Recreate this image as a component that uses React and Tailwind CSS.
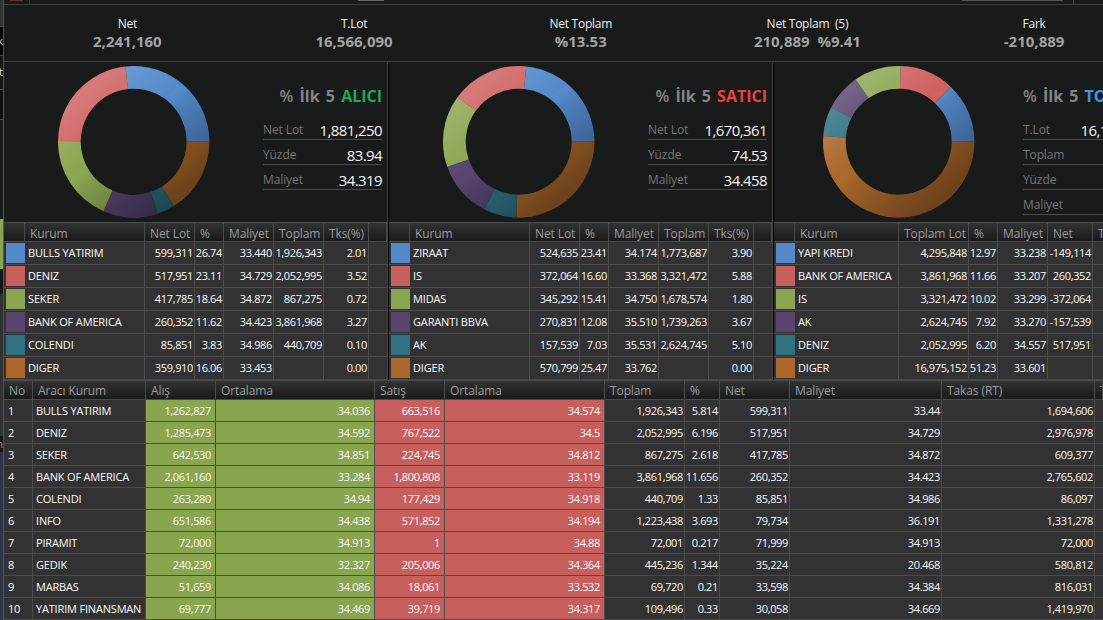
const HEAD = 'bg-linear-to-b from-[#323333] to-[#191a1a]';
const TXT = 'text-[11px] tracking-[-0.35px] text-[#fafafa]';

const COLORS = ['#5389cb', '#cf6060', '#8ba550', '#57446f', '#2f7181', '#ac682b'];
const SWATCHES = ['bg-[#5389c6]', 'bg-[#c75f5d]', 'bg-[#8ba550]', 'bg-[#57446f]', 'bg-[#2f7181]', 'bg-[#ac682b]'];

function point(r, share) {
  const a = share * Math.PI * 2;
  return `${(76 + r * Math.cos(a)).toFixed(2)} ${(76 - r * Math.sin(a)).toFixed(2)}`;
}

function Donut({ id, shares }) {
  let from = 0;
  const total = shares.reduce((a, b) => a + b, 0);
  const arcs = shares.map((s, i) => {
    const a = from;
    const b = from + s / total;
    from = b;
    const big = b - a > 0.5 ? 1 : 0;
    const d = `M${point(75.7, a)}A75.7 75.7 0 ${big} 0 ${point(75.7, b)}L${point(53, b)}A53 53 0 ${big} 1 ${point(53, a)}Z`;
    return <path key={i} d={d} fill={COLORS[i]} />;
  });
  return (
    <svg width="152" height="152" viewBox="0.3 0.2 152 152" className="shrink-0">
      <defs>
        <linearGradient id={id} x1="0.15" y1="0.1" x2="0.85" y2="0.9">
          <stop offset="0" stopColor="#fff" stopOpacity="0.16" />
          <stop offset="0.4" stopColor="#fff" stopOpacity="0" />
          <stop offset="0.5" stopColor="#000" stopOpacity="0.06" />
          <stop offset="1" stopColor="#000" stopOpacity="0.36" />
        </linearGradient>
      </defs>
      {arcs}
      <circle cx="76" cy="76" r="64.35" fill="none" stroke={`url(#${id})`} strokeWidth="22.7" />
    </svg>
  );
}

function Summary({ label, value }) {
  return (
    <div className="flex w-[226.7px] shrink-0 flex-col items-center whitespace-pre">
      <div className="text-[12px] leading-[18px] tracking-[-0.25px] text-[#f0f0f0]">{label}</div>
      <div className="-mt-px text-[15px] font-bold leading-[18px] text-[#a3a3a3]">{value}</div>
    </div>
  );
}

function Panel({ id, title, color, chartPad, infoCls, titleCls, cols, heads, rows, shares, info }) {
  return (
    <section className="flex w-[383px] shrink-0 flex-col overflow-hidden bg-[#191a1a]">
      <div className={`flex h-[160px] pt-1 ${chartPad}`}>
        <Donut id={id} shares={shares} />
        <div className={`${infoCls} shrink-0 pt-[18px]`}>
          <div className={`flex h-6 items-center whitespace-pre text-[16px] font-bold [word-spacing:2px] text-[#858585] ${titleCls}`}>
            <span className="font-semibold">% </span>İlk 5 <span className={color}>{title}</span>
          </div>
          <div className="pt-[7px]">
            {info.map(([k, v]) => (
              <div key={k} className="flex h-[25px] items-end justify-between border-b border-[#4a4a4a] whitespace-nowrap">
                <span className="text-[12px] leading-[18px] tracking-[-0.1px] text-[#777]">{k}</span>
                <span className="text-[15px] leading-[18px] tracking-[-0.6px] text-[#f4f4f4]">{v}</span>
              </div>
            ))}
          </div>
        </div>
      </div>
      <div className={`${HEAD} ${cols} grid h-5 border-y border-[#4b4b4b] text-[12px] tracking-[-0.1px] text-[#9c9c9c]`}>
        {heads.map((h, i) => (
          <div key={i} className="flex items-center whitespace-nowrap border-r border-[#4b4b4b] pl-[5px] pt-[2px]">{h}</div>
        ))}
      </div>
      {rows.map((r, i) => (
        <div key={i} className={`${cols} ${TXT} grid h-[23px] border-b border-[#4b4b4b] bg-[#323232]`}>
          <div className="flex pl-[2px] pt-px">
            <div className={`h-5 w-full ${SWATCHES[i]}`} />
          </div>
          <div className="flex items-center whitespace-nowrap border-r border-[#4b4b4b] pl-[3px] tracking-[-0.15px]">{r[0]}</div>
          {r.slice(1).map((c, j) => (
            <div key={j} className="flex items-center justify-end whitespace-nowrap border-r border-[#4b4b4b] pr-px">{c}</div>
          ))}
          <div />
        </div>
      ))}
    </section>
  );
}

const COLS_A = 'grid-cols-[21px_120px_50px_29px_50px_50px_45px_18px]';
const COLS_B = 'grid-cols-[21px_104px_70px_29px_50px_45px_64px]';
const HEADS_A = ['', 'Kurum', 'Net Lot', '%', 'Maliyet', 'Toplam', 'Tks(%)', ''];
const HEADS_B = ['', 'Kurum', 'Toplam Lot', '%', 'Maliyet', 'Net', 'Tks(%)'];

const BUYERS = [
  ['BULLS YATIRIM', '599,311', '26.74', '33.440', '1,926,343', '2.01'],
  ['DENIZ', '517,951', '23.11', '34.729', '2,052,995', '3.52'],
  ['SEKER', '417,785', '18.64', '34.872', '867,275', '0.72'],
  ['BANK OF AMERICA', '260,352', '11.62', '34.423', '3,861,968', '3.27'],
  ['COLENDI', '85,851', '3.83', '34.986', '440,709', '0.10'],
  ['DIGER', '359,910', '16.06', '33.453', '', '0.00'],
];
const SELLERS = [
  ['ZIRAAT', '524,635', '23.41', '34.174', '1,773,687', '3.90'],
  ['IS', '372,064', '16.60', '33.368', '3,321,472', '5.88'],
  ['MIDAS', '345,292', '15.41', '34.750', '1,678,574', '1.80'],
  ['GARANTI BBVA', '270,831', '12.08', '35.510', '1,739,263', '3.67'],
  ['AK', '157,539', '7.03', '35.531', '2,624,745', '5.10'],
  ['DIGER', '570,799', '25.47', '33.762', '', '0.00'],
];
const TOTALS = [
  ['YAPI KREDI', '4,295,848', '12.97', '33.238', '-149,114'],
  ['BANK OF AMERICA', '3,861,968', '11.66', '33.207', '260,352'],
  ['IS', '3,321,472', '10.02', '33.299', '-372,064'],
  ['AK', '2,624,745', '7.92', '33.270', '-157,539'],
  ['DENIZ', '2,052,995', '6.20', '34.557', '517,951'],
  ['DIGER', '16,975,152', '51.23', '33.601', ''],
];

const BROKER_COLS = 'grid-cols-[29px_113px_70px_159px_70px_160px_80px_35px_70px_152px_153px_8px]';
const BROKER_HEADS = ['No', 'Aracı Kurum', 'Alış', 'Ortalama', 'Satış', 'Ortalama', 'Toplam', '%', 'Net', 'Maliyet', 'Takas (RT)', 'T'];
const BROKER_CELLS = [
  'pl-1',
  'pl-[3px] tracking-[-0.18px]',
  'justify-end pr-1 bg-[#8aa54f]',
  'justify-end pr-1 bg-[#8aa54f]',
  'justify-end pr-1 bg-[#c75f5d]',
  'justify-end pr-1 bg-[#c75f5d]',
  'justify-end pr-px',
  'justify-end pr-px',
  'justify-end pr-px',
  'justify-end pr-px',
  'justify-end pr-px',
];
const BROKERS = [
  ['1', 'BULLS YATIRIM', '1,262,827', '34.036', '663,516', '34.574', '1,926,343', '5.814', '599,311', '33.44', '1,694,606'],
  ['2', 'DENIZ', '1,285,473', '34.592', '767,522', '34.5', '2,052,995', '6.196', '517,951', '34.729', '2,976,978'],
  ['3', 'SEKER', '642,530', '34.851', '224,745', '34.812', '867,275', '2.618', '417,785', '34.872', '609,377'],
  ['4', 'BANK OF AMERICA', '2,061,160', '33.284', '1,800,808', '33.119', '3,861,968', '11.656', '260,352', '34.423', '2,765,602'],
  ['5', 'COLENDI', '263,280', '34.94', '177,429', '34.918', '440,709', '1.33', '85,851', '34.986', '86,097'],
  ['6', 'INFO', '651,586', '34.438', '571,852', '34.194', '1,223,438', '3.693', '79,734', '36.191', '1,331,278'],
  ['7', 'PIRAMIT', '72,000', '34.913', '1', '34.88', '72,001', '0.217', '71,999', '34.913', '72,000'],
  ['8', 'GEDIK', '240,230', '32.327', '205,006', '34.364', '445,236', '1.344', '35,224', '20.468', '580,812'],
  ['9', 'MARBAS', '51,659', '34.086', '18,061', '33.532', '69,720', '0.21', '33,598', '34.384', '816,031'],
  ['10', 'YATIRIM FINANSMAN', '69,777', '34.469', '39,719', '34.317', '109,496', '0.33', '30,058', '34.669', '1,419,970'],
];

function EdgeStrip() {
  return (
    <div className="flex w-[3px] shrink-0 flex-col overflow-hidden bg-[#2b2c2c] text-[11px] text-[#ddd]">
      <div className="h-[26px] bg-[#303232]" />
      <div className="flex h-[30px] items-center justify-end overflow-hidden border-y border-[#4b4b4b] bg-black">k</div>
      <div className="flex h-[34px] items-center justify-end overflow-hidden border-b border-[#4b4b4b] bg-[#151616]">t</div>
      <div className="h-[30px] border-b border-[#4b4b4b] bg-[#0d0d0d]" />
      <div className="h-[99px] bg-[#191a1a]" />
      <div className="h-[50px] bg-[#8aa54f]" />
      <div className="h-[25px] bg-[#161717]" />
      <div className="h-[142px] bg-[#303133]" />
      <div className="flex h-[16px] items-center justify-end overflow-hidden bg-[#161717] text-[#999]">n</div>
      <div className="flex-1 bg-[#2c3446]" />
    </div>
  );
}

export default function App() {
  return (
    <div className="flex h-[620px] w-[1103px] overflow-hidden bg-[#191a1a] font-['Open_Sans',sans-serif]">
      <EdgeStrip />
      <main className="flex min-w-0 flex-1 flex-col overflow-hidden border-l border-[#555]">
        <div className="flex h-[5px] shrink-0 border-b border-[#3c3d3d]">
          <div className="ml-[6px] h-px w-[13px] bg-[#5c3535]" />
          <div className="ml-[6px] h-1 w-px bg-[#333]" />
          <div className="ml-[328px] h-px w-[26px] bg-[#666]" />
          <div className="ml-[578px] h-px w-[101px] bg-[#555]" />
          <div className="ml-[10px] h-1 w-px bg-[#444]" />
        </div>
        <div className="flex h-[57px] shrink-0 border-b border-[#3c3d3d] pl-[10px] pt-[10px]">
          <Summary label="Net" value="2,241,160" />
          <Summary label="T.Lot" value="16,566,090" />
          <Summary label="Net Toplam" value="%13.53" />
          <Summary label="Net Toplam  (5)" value="210,889  %9.41" />
          <Summary label="Fark" value="-210,889" />
        </div>
        <div className="flex h-[318px] shrink-0 overflow-hidden">
          <Panel id="buy" title="ALICI" color="text-[#1fa855]" chartPad="pl-[54px]" infoCls="ml-[53px] w-[119px]" titleCls="justify-end"
            cols={COLS_A} heads={HEADS_A} rows={BUYERS} shares={[26.74, 23.11, 18.64, 11.62, 3.83, 16.06]}
            info={[['Net Lot', '1,881,250'], ['Yüzde', '83.94'], ['Maliyet', '34.319']]} />
          <div className="w-[2px] shrink-0 border-l border-[#444] bg-black" />
          <Panel id="sell" title="SATICI" color="text-[#ec4141]" chartPad="pl-[54px]" infoCls="ml-[53px] w-[119px]" titleCls="justify-end"
            cols={COLS_A} heads={HEADS_A} rows={SELLERS} shares={[23.41, 16.6, 15.41, 12.08, 7.03, 25.47]}
            info={[['Net Lot', '1,670,361'], ['Yüzde', '74.53'], ['Maliyet', '34.458']]} />
          <div className="w-[2px] shrink-0 border-l border-[#444] bg-black" />
          <Panel id="all" title="TOPLAM" color="text-[#4795dc]" chartPad="pl-[49px]" infoCls="ml-[48px] w-[128px]" titleCls="justify-start"
            cols={COLS_B} heads={HEADS_B} rows={TOTALS} shares={[12.97, 11.66, 10.02, 7.92, 6.2, 51.23]}
            info={[['T.Lot', '16,157,028'], ['Toplam', ''], ['Yüzde', ''], ['Maliyet', '']]} />
        </div>
        <div className="flex shrink-0 flex-col">
          <div className={`${HEAD} ${BROKER_COLS} grid h-5 border-y border-[#4b4b4b] text-[12px] tracking-[-0.1px] text-[#9c9c9c]`}>
            {BROKER_HEADS.map((h, i) => (
              <div key={i} className="flex items-center overflow-hidden whitespace-nowrap border-r border-[#4b4b4b] pl-[5px] pt-[2px]">{h}</div>
            ))}
          </div>
          {BROKERS.map((r) => (
            <div key={r[0]} className={`${BROKER_COLS} ${TXT} grid h-[22px] border-b border-[#4b4b4b] bg-[#323232]`}>
              {r.map((c, j) => (
                <div key={j} className={`flex items-center whitespace-nowrap border-r border-[#4b4b4b] pt-[2px] ${BROKER_CELLS[j]}`}>{c}</div>
              ))}
            </div>
          ))}
        </div>
      </main>
    </div>
  );
}
